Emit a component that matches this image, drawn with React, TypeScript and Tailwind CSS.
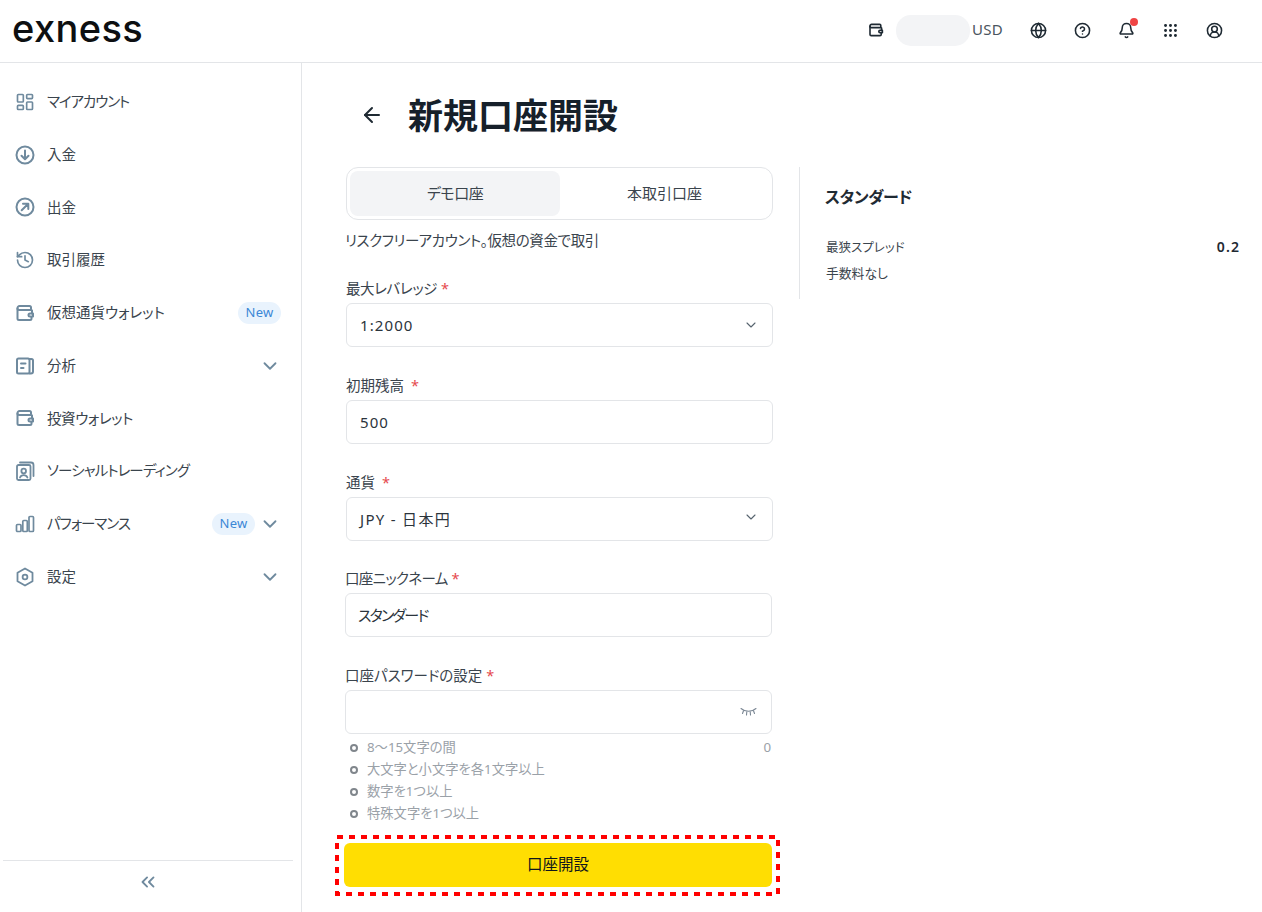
import React from "react";
import { LayoutDashboard, History, ChevronDown, Globe, CircleHelp, Bell, Grip, CircleUserRound, ArrowLeft, ChevronsLeft } from "lucide-react";

const Wallet = ({ s = 20, c = "#6f8a9e" }: { s?: number; c?: string }) => (
  <svg width={s} height={s} viewBox="0 0 20 20" fill="none" stroke={c} strokeWidth="2" strokeLinejoin="round" strokeLinecap="round">
    <path d="M16 6V4.500A1.500 1.500 0 0 0 14.500 3H4.500A2 2 0 0 0 2.500 5v10.500A1.500 1.500 0 0 0 4 17h11a1.500 1.500 0 0 0 1.500-1.500V14" />
    <path d="M2.500 5.500A1.500 1.500 0 0 0 4 7h12a1.500 1.500 0 0 1 1 .5v3" />
    <path d="M18 10.500h-3a1.500 1.500 0 0 0 0 3h3z" />
  </svg>
);
const CircleDown = () => (
  <svg width="20" height="20" viewBox="0 0 20 20" fill="none" stroke="#6f8a9e" strokeWidth="2" strokeLinecap="round" strokeLinejoin="round">
    <circle cx="10" cy="10" r="8.500" />
    <path d="M10 5.500v8.500M6.500 10.800L10 14.300l3.500-3.500" />
  </svg>
);
const CircleUpRight = () => (
  <svg width="20" height="20" viewBox="0 0 20 20" fill="none" stroke="#6f8a9e" strokeWidth="2" strokeLinecap="round" strokeLinejoin="round">
    <circle cx="10" cy="10" r="8.500" />
    <path d="M6.700 13.300L13 7M8 6.700h5.300V12" />
  </svg>
);
const News = () => (
  <svg width="20" height="20" viewBox="0 0 20 20" fill="none" stroke="#6f8a9e" strokeWidth="2" strokeLinecap="round" strokeLinejoin="round">
    <rect x="2" y="2.500" width="12.500" height="15" rx="1.500" />
    <path d="M14.500 3h2a1.500 1.500 0 0 1 1.500 1.500v11a2 2 0 0 1-2 2h-1.500" />
    <path d="M6 7.500h4.500M6 12h2.500" />
  </svg>
);
const Social = () => (
  <svg width="20" height="20" viewBox="0 0 20 20" fill="none" stroke="#6f8a9e" strokeWidth="1.800" strokeLinecap="round" strokeLinejoin="round">
    <rect x="2" y="4" width="13.500" height="15" rx="1.500" />
    <circle cx="8.700" cy="10" r="2.300" />
    <path d="M5 16.500c.8-1.800 2-2.300 3.700-2.300s2.900.5 3.700 2.300" />
    <path d="M5 1.500h11a2.500 2.500 0 0 1 2.500 2.500v11" />
  </svg>
);
const Hex = () => (
  <svg width="22" height="22" viewBox="0 0 20 20" fill="none" stroke="#6f8a9e" strokeWidth="1.800" strokeLinejoin="round">
    <path d="M10 1.500l7.500 4.300v8.400L10 18.500l-7.500-4.300V5.800z" />
    <circle cx="10" cy="10" r="2.400" />
  </svg>
);
const Bars = () => (
  <svg width="22" height="22" viewBox="0 0 20 20" fill="none" stroke="#6f8a9e" strokeWidth="1.700" strokeLinejoin="round">
    <rect x="1.500" y="10.500" width="4.500" height="7" rx="1" />
    <rect x="7.800" y="6.500" width="4.500" height="11" rx="1" />
    <rect x="14" y="2.500" width="4.500" height="15" rx="1" />
  </svg>
);
const Eyelash = () => (
  <svg width="17" height="10" viewBox="0 0 17 10" fill="none" stroke="#7b8794" strokeWidth="1.100" strokeLinecap="round">
    <path d="M1 1.500c4 3.600 11 3.600 15 0" />
    <path d="M3.500 3.800L2.500 6.500M6.800 4.800L6.500 8M10.200 4.800L10.500 8M13.500 3.800L14.500 6.500" />
  </svg>
);

const ic = { size: 20, color: "#6f8a9e", strokeWidth: 2 };
const items: { icon: React.ReactNode; label: string; track?: string; isNew?: boolean; chev?: boolean }[] = [
  { icon: <LayoutDashboard {...ic} />, label: "マイアカウント", track: "tracking-[-1.1px]" },
  { icon: <CircleDown />, label: "入金" },
  { icon: <CircleUpRight />, label: "出金" },
  { icon: <History {...ic} />, label: "取引履歴" },
  { icon: <Wallet />, label: "仮想通貨ウォレット", isNew: true },
  { icon: <News />, label: "分析", chev: true },
  { icon: <Wallet />, label: "投資ウォレット", track: "tracking-[-0.4px]" },
  { icon: <Social />, label: "ソーシャルトレーディング", track: "tracking-[-0.9px]" },
  { icon: <Bars />, label: "パフォーマンス", track: "tracking-[-1px]", isNew: true, chev: true },
  { icon: <Hex />, label: "設定", chev: true },
];

const hi = { size: 17, color: "#1f2a33", strokeWidth: 2.200 };

const Field = ({ label, value, chev, shift, tall, up, track = "tracking-[1.1px]", labelTrack = "", star = "ml-1" }: { label: string; value: string; chev?: boolean; shift?: boolean; tall?: boolean; up?: boolean; track?: string; labelTrack?: string; star?: string }) => (
  <div className={`${shift ? "-ml-px mr-px" : ""} ${tall ? "h-[97px]" : "h-[96px]"}`}>
    <div className="h-[37px] flex items-end pb-[3px] text-[14.500px] text-[#3a444d]">
      <span className={labelTrack}>{label}</span>
      <span className={`${star} text-[#e5484d]`}>*</span>
    </div>
    <div className={`h-[44px] border border-[#e3e5e8] rounded-md flex items-center justify-between pr-[13px] text-[15px] text-[#2b343c] ${shift ? "pl-3" : "pl-[13px]"}`}>
      <span className={track}>{value}</span>
      {chev && <ChevronDown size={16} color="#56636e" strokeWidth={1.6} className={up ? "-mt-[5px]" : ""} />}
    </div>
  </div>
);

const hints = ["8～15文字の間", "大文字と小文字を各1文字以上", "数字を1つ以上", "特殊文字を1つ以上"];

export default function App() {
  return (
    <div className="h-[912px] overflow-hidden flex flex-col bg-white text-[#1f2a33] font-['Noto_Sans','Noto_Sans_CJK_JP',sans-serif] [font-feature-settings:'palt']">
      <header className="h-[63px] shrink-0 border-b border-[#e3e5e8] flex items-center justify-between pl-3 pr-[26px] pb-[2px]">
        <span className="font-['Inter',sans-serif] font-[550] text-[38px] leading-none -mt-1 text-[#0d0f11] tracking-[0.4px]">exness</span>
        <div className="flex items-center">
          <Wallet s={16} c="#1f2a33" />
          <div className="ml-3 w-[74px] h-[31px] rounded-[15px] bg-[#f3f4f6]" />
          <span className="ml-[2px] mr-[13px] text-[15px] text-[#4b5560] tracking-[0.3px] -mt-[2px]">USD</span>
          <div className="w-11 flex justify-center"><Globe {...hi} /></div>
          <div className="w-11 flex justify-center"><CircleHelp {...hi} /></div>
          <div className="w-11 flex justify-center relative">
            <Bell {...hi} />
            <span className="absolute top-[-4px] left-[26px] w-[8px] h-[8px] rounded-full bg-[#ef4444]" />
          </div>
          <div className="w-11 flex justify-center"><Grip {...hi} /></div>
          <div className="w-11 flex justify-center"><CircleUserRound {...hi} /></div>
        </div>
      </header>
      <div className="flex-1 flex min-h-0">
        <aside className="w-[302px] shrink-0 border-r border-[#e3e5e8] flex flex-col pt-[12.600px]">
          {items.map((it) => (
            <div key={it.label} className="h-[52.750px] shrink-0 flex items-center pl-[15px] pr-5 text-[14.500px] text-[#3a444d]">
              <span className="w-5 flex justify-center">{it.icon}</span>
              <span className={`ml-3 flex-1 ${it.track ?? ""}`}>{it.label}</span>
              {it.isNew && (
                <span className="w-[43px] h-[22px] rounded-full bg-[#e9f3fd] text-[#3b87d6] text-[13px] flex items-center justify-center tracking-[0.3px]">New</span>
              )}
              {it.chev && <ChevronDown size={22} color="#6f8a9e" strokeWidth={2} className="ml-1" />}
            </div>
          ))}
          <div className="mt-auto mx-[3px] mr-2 h-[52px] border-t border-[#e3e5e8] flex items-start justify-center pt-[10px]">
            <ChevronsLeft size={22} color="#6f8a9e" strokeWidth={2} />
          </div>
        </aside>
        <main className="flex-1 pl-[44px] min-w-0">
          <div className="h-[104px] flex items-center pt-[2px]">
            <ArrowLeft size={24} color="#1f2a33" strokeWidth={2} className="ml-[14px] -mt-[2px]" />
            <h1 className="ml-[24px] font-bold text-[35px] text-[#16202a] [font-feature-settings:normal]">新規口座開設</h1>
          </div>
          <div className="flex">
            <div className="w-[427px] shrink-0">
              <div className="h-[53px] border border-[#e3e5e8] rounded-xl p-[3px] flex text-[15px] text-[#3a444d]">
                <div className="w-[210px] bg-[#f3f4f6] rounded-lg flex items-center justify-center tracking-[-0.5px]">デモ口座</div>
                <div className="flex-1 flex items-center justify-center">本取引口座</div>
              </div>
              <p className="-ml-px mt-[9px] mb-[15px] text-[14.500px] leading-[22px] text-[#3a444d] tracking-[-0.35px]">リスクフリーアカウント。仮想の資金で取引</p>
              <Field tall label="最大レバレッジ" value="1:2000" chev labelTrack="tracking-[-0.4px]" />
              <Field tall label="初期残高" value="500" star="ml-[7px]" />
              <Field label="通貨" value="JPY - 日本円" chev up track="tracking-[1.3px]" star="ml-[7px]" />
              <Field tall label="口座ニックネーム" value="スタンダード" shift track="tracking-[-1.8px]" labelTrack="tracking-[-0.7px]" />
              <div className="-ml-px mr-px">
                <div className="h-[37px] flex items-end pb-[3px] text-[14.500px] text-[#3a444d]">
                  <span>口座パスワードの設定</span>
                  <span className="ml-1 text-[#e5484d]">*</span>
                </div>
                <div className="h-[44px] border border-[#e3e5e8] rounded-md flex items-center justify-end pr-[14px]">
                  <Eyelash />
                </div>
                <div className="mt-[3px]">
                  {hints.map((h, i) => (
                    <div key={h} className="h-[22px] flex items-center pl-[5px] text-[13.300px] text-[#9aa1a8]">
                      <span className="w-[8px] h-[8px] rounded-full border-2 border-[#80868c]" />
                      <span className="ml-[9px] flex-1">{h}</span>
                      {i === 0 && <span className="mr-[1px]">0</span>}
                    </div>
                  ))}
                </div>
                <div className="relative mt-[18px] h-[44px] -ml-px">
                  <button className="w-[428px] h-[44px] bg-[#ffde02] rounded-md text-[15.500px] text-[#10161c]">口座開設</button>
                  <svg width="445" height="61" className="absolute top-[-8px] left-[-9px]" fill="none">
                    <rect x="2" y="2" width="441" height="57" stroke="#ff0000" strokeWidth="4" strokeDasharray="6 6" />
                  </svg>
                </div>
              </div>
            </div>
            <aside className="ml-[26px] h-[132px] w-[441px] shrink-0 border-l border-[#e3e5e8] pl-[26px]">
              <div className="mt-[18px] -ml-px font-bold text-[16px] leading-6 text-[#1f2a33] tracking-[-0.4px]">スタンダード</div>
              <div className="mt-[26px] flex items-center justify-between h-[26px] text-[12.500px] text-[#3a444d]">
                <span>最狭スプレッド</span>
                <span className="font-semibold text-[14px] tracking-[1.1px] text-[#1f2a33] -mt-[4px]">0.2</span>
              </div>
              <div className="h-[26px] flex items-center text-[12.800px] text-[#3a444d]">手数料なし</div>
            </aside>
          </div>
        </main>
      </div>
    </div>
  );
}
